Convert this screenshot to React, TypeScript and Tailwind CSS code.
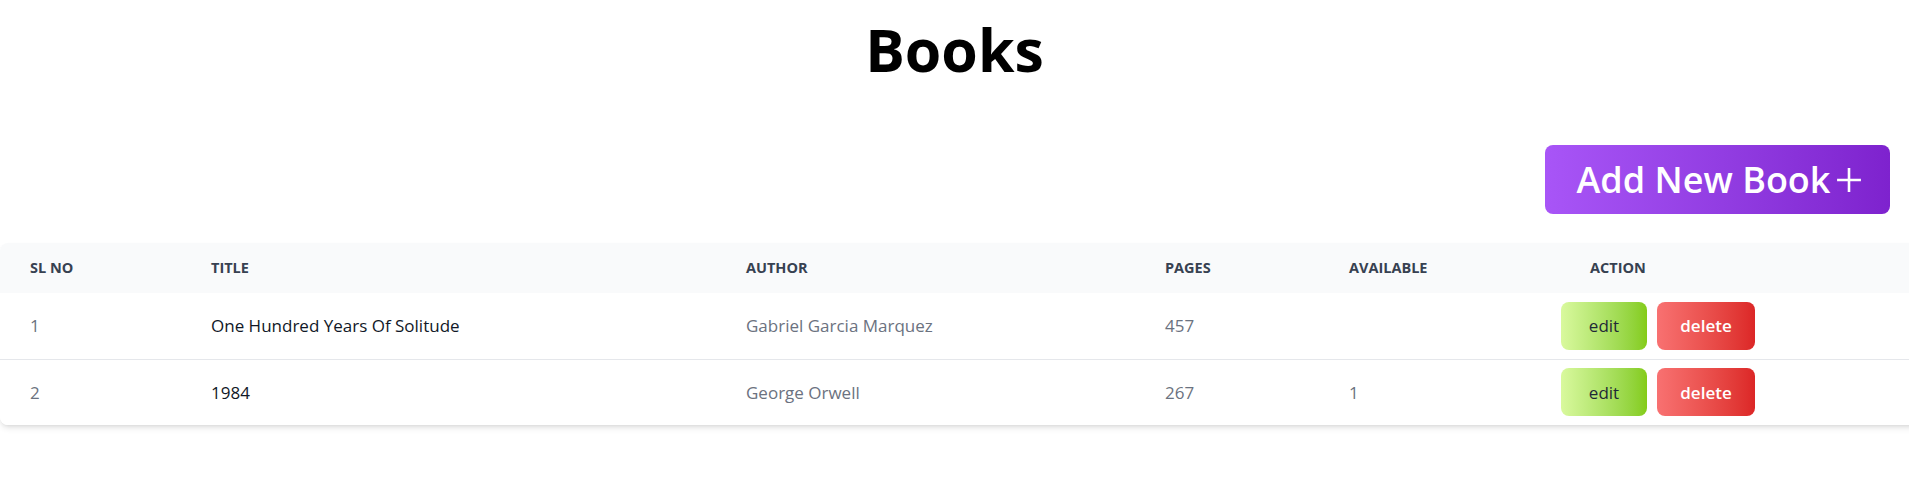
import React from "react";

type Book = { id: number; title: string; author: string; pages: number; available?: number };

const books: Book[] = [
  { id: 1, title: "One Hundred Years Of Solitude", author: "Gabriel Garcia Marquez", pages: 457 },
  { id: 2, title: "1984", author: "George Orwell", pages: 267, available: 1 },
];

export default function App() {
  return (
    <div className="min-h-screen w-full overflow-hidden bg-white font-['Open_Sans',sans-serif]">
      {/* Heading */}
      <h1 className="pt-[10px] text-center text-[59px] font-bold leading-[78px] text-black">Books</h1>

      {/* Add button */}
      <div className="mt-[57px] flex justify-end pr-[19px]">
        <button className="flex h-[69px] w-[345px] items-center justify-center gap-[6px] rounded-lg bg-gradient-to-r from-[#a855f7] to-[#7e22ce] pl-[4px] text-[36px] font-semibold text-white">
          <span>Add New Book</span>
          <svg width="26" height="26" viewBox="0 0 24 24" fill="none" aria-hidden>
            <path d="M12 1v22M1 12h22" stroke="white" strokeWidth="2.4" />
          </svg>
        </button>
      </div>

      {/* Table */}
      <div className="mt-[29px] w-[1960px] overflow-hidden rounded-lg shadow-md">
        <table className="w-full table-fixed border-collapse text-left">
          <colgroup>
            <col className="w-[211px]" />
            <col className="w-[535px]" />
            <col className="w-[419px]" />
            <col className="w-[184px]" />
            <col className="w-[182px]" />
            <col />
          </colgroup>
          <thead className="bg-[#f9fafb] text-[14.5px] font-bold uppercase text-[#374151]">
            <tr className="h-[50px]">
              <th className="pl-[30px]">SL No</th>
              <th>Title</th>
              <th>Author</th>
              <th>Pages</th>
              <th>Available</th>
              <th className="pl-[59px]">Action</th>
            </tr>
          </thead>
          <tbody className="text-[17px]">
            {books.map((b, i) => (
              <tr key={b.id} className={`h-[66px] bg-white ${i === 0 ? "border-b border-[#e5e7eb]" : ""}`}>
                <td className="pl-[30px] text-[#6b7280]">{b.id}</td>
                <td className="text-[#111827]">{b.title}</td>
                <td className="text-[#6b7280]">{b.author}</td>
                <td className="text-[#6b7280]">{b.pages}</td>
                <td className="text-[#6b7280]">{b.available ?? ""}</td>
                <td className="pl-[30px]">
                  <div className="flex gap-[10px]">
                    <button className="h-12 w-[86px] rounded-lg bg-gradient-to-r from-[#d9f99d] to-[#84cc16] text-[17px] font-medium text-[#1f2937]">
                      edit
                    </button>
                    <button className="h-12 w-[98px] rounded-lg bg-gradient-to-r from-[#f87171] to-[#dc2626] text-[17px] font-semibold text-white">
                      delete
                    </button>
                  </div>
                </td>
              </tr>
            ))}
          </tbody>
        </table>
      </div>
    </div>
  );
}
